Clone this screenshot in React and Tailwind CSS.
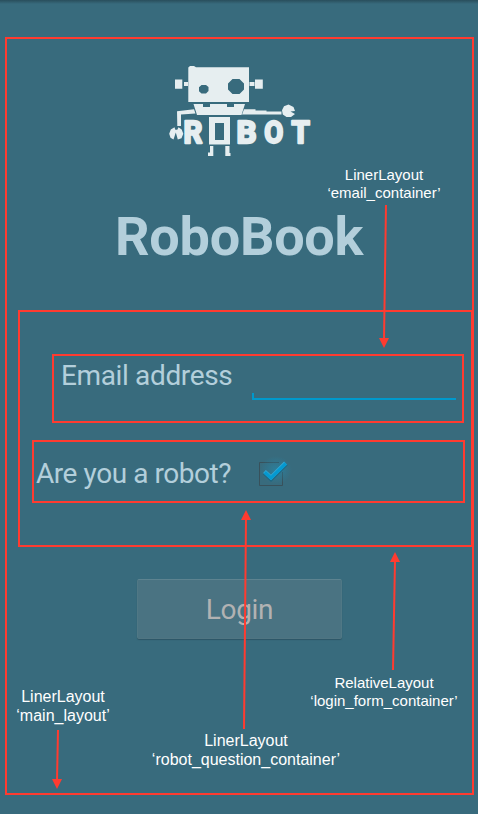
import React from "react";

const INK = "#e6eef0";

function RobotLogo() {
  return (
    <svg className="block h-[100px] w-[160px]" viewBox="160 60 160 100" fill={INK} aria-label="Robot">
      {/* head, eyes and ears */}
      <path
        fillRule="evenodd"
        d="M188.3 67.5L190 66h4l2 1.3H249V102H188.3ZM201.500 85l-2.500 2.200v4l2.500 2.300h4.500l2.500-2.500v-4l-2.500-2zM232.500 79l-4.500 4.500v6l4.500 4.500h7l4.500-4.500v-6l-4.500-4.500z"
      />
      <path d="M175 79.500h7.300v9.300H175zM184 82h4v4h-4zM249.500 82h5v4h-5zM255 79.500h7.800v9.300H255z" />
      {/* jaw */}
      <path d="M193.500 104h9.500v3h7v-3h17v3h7v-3h11l-3.500 11h-44.500z" />
      {/* arms */}
      <path d="M177 111.300l17-2 1.500 4.200-14.500 1V126h-3.700zM244 109.300h11.500v1.200h11v1h15v3H242z" />
      {/* claws */}
      <path d="M174.500 127.200l-3.700 2.300-1.600 4.200 1.300 4 3 1.800 2.300-7 2 7 3.700-1.200 1.800-4.500-1.600-4.400-3.200-2.200-1.200 2.500-2 0zM288.500 104.500l-4.500 1.800-2 4 .8 4.200 3.700 2.500h4.500l4-3-4.500-2.500 4.500-.5-1.500-4z" />
      {/* torso and legs */}
      <path fillRule="evenodd" d="M209 117h21v27.500h-21zM215 123v17h9v-17z" />
      <path d="M210 146h3.300v10H208v-3.500h2zM225.300 146h4.200v7h1v3h-5.200z" />
      <g
        fontFamily="Roboto, sans-serif"
        fontWeight="700"
        fontSize="32"
        stroke={INK}
        strokeWidth="2.400"
        strokeLinejoin="round"
      >
        <text transform="translate(183.600 143)  scale(.92 1)">R</text>
        <text transform="translate(236.500 143) scale(.98 1)">B</text>
        <text transform="translate(264.200 142.600) scale(.86 .97)">O</text>
        <text transform="translate(291.500 143) scale(.92 1)">T</text>
      </g>
    </svg>
  );
}

function CheckBox() {
  return (
    <svg className="ml-[23px] mt-[12px] block h-[40px] w-[40px]" viewBox="255 454 40 40" fill="none">
      <defs>
        <radialGradient id="glow">
          <stop offset="0" stopColor="#199bc8" stopOpacity=".4" />
          <stop offset="1" stopColor="#199bc8" stopOpacity="0" />
        </radialGradient>
      </defs>
      <path d="M279 462.500H259.500V485.500H282.500V472" stroke="#38515b" />
      <ellipse cx="276" cy="470" rx="16" ry="14" fill="url(#glow)" />
      <path d="M264.500 472.500L271 478.500L286 463.500" stroke="#1f6681" strokeWidth="5" />
      <path d="M264.500 471.500L271 477.500L285.500 463" stroke="#35aad5" strokeWidth="4" />
      <path d="M264.800 472.300L271 478L285.800 463.500" stroke="#0499d0" strokeWidth="3.200" />
    </svg>
  );
}

function Arrow({ from, to }) {
  const [x, y] = to;
  const dir = y > from[1] ? -1 : 1;
  return (
    <g>
      <line x1={from[0]} y1={from[1]} x2={x} y2={y + dir * 8} stroke="#ff3b30" strokeWidth="2" />
      <path d={`M${x} ${y}L${x - 5} ${y + dir * 10}H${x + 5}Z`} fill="#ff3b30" />
    </g>
  );
}

function Label({ kind, name, className }) {
  return (
    <div
      className={`absolute flex flex-col items-center whitespace-nowrap font-['Liberation_Sans',Arial,sans-serif] text-white ${className}`}
    >
      <span>{kind}</span>
      <span>‘{name}’</span>
    </div>
  );
}

export default function App() {
  return (
    <div className="relative h-[814px] w-[478px] overflow-hidden bg-[#386b7d] pt-[37px] font-[Roboto,sans-serif] text-[#b3cfdb]">
      <div className="absolute inset-x-0 top-0 h-[4px] bg-linear-to-b from-[#294e5c] to-[#386b7d]" />
      <main className="ml-[5px] flex h-[758px] w-[469px] flex-col border-2 border-[#ff3b30]">
        <div className="ml-[153px] mt-[21px]">
          <RobotLogo />
        </div>
        <h1 className="ml-[108px] mt-[45px] h-[64px] whitespace-nowrap text-[54px] font-bold leading-[64px] tracking-[-0.25px]">
          RoboBook
        </h1>
        <section className="ml-[11px] mt-[41px] h-[237px] w-[455px] shrink-0 border-2 border-[#ff3b30] pt-[42px]">
          <div className="ml-[32px] flex h-[69px] w-[412px] border-2 border-[#ff3b30]">
            <label className="ml-[7px] mt-[3px] w-[191px] whitespace-nowrap text-[28px] leading-[34px] tracking-[-0.36px]">
              Email address
            </label>
            <div className="mt-[37px] h-[7px] w-[204px] border-b-2 border-l-2 border-[#0099cc]" />
          </div>
          <div className="ml-[12px] mt-[17px] flex h-[63px] w-[433px] border-2 border-[#ff3b30]">
            <label className="ml-[2px] mt-[15px] w-[196px] whitespace-nowrap text-[28px] leading-[34px] tracking-[-0.44px]">
              Are you a robot?
            </label>
            <CheckBox />
          </div>
        </section>
        <button className="ml-[130px] mt-[32px] h-[60px] w-[205px] rounded-[2px] border border-t-[#5d8390] border-x-[#507885] border-b-[#507582] bg-[#4a7382] pt-[2px] text-[28px] tracking-[-0.3px] text-[#b2b2b2] shadow-[0_1px_1px_#2d5666]">
          Login
        </button>
      </main>
      <svg className="absolute left-0 top-0 h-[814px] w-[478px]" viewBox="0 0 478 814">
        <Arrow from={[386, 205]} to={[384, 348]} />
        <Arrow from={[244, 729]} to={[246, 510]} />
        <Arrow from={[393, 670]} to={[395, 552]} />
        <Arrow from={[58, 730]} to={[57, 789]} />
      </svg>
      <Label kind="LinerLayout" name="email_container" className="left-[284px] top-[166px] w-[200px] text-[15px] leading-[18px]" />
      <Label kind="RelativeLayout" name="login_form_container" className="left-[284px] top-[674px] w-[200px] text-[15px] leading-[18px]" />
      <Label kind="LinerLayout" name="main_layout" className="left-[-37px] top-[687px] w-[200px] text-[16px] leading-[19px]" />
      <Label kind="LinerLayout" name="robot_question_container" className="left-[146px] top-[731px] w-[200px] text-[16px] leading-[19px]" />
    </div>
  );
}
